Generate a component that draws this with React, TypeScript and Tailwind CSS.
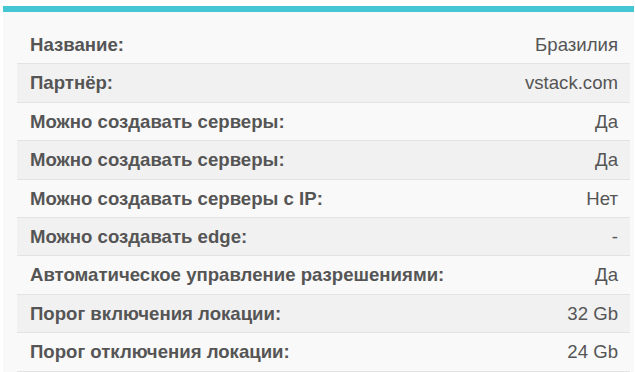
const rows: [string, string][] = [
  ['Название:', 'Бразилия'],
  ['Партнёр:', 'vstack.com'],
  ['Можно создавать серверы:', 'Да'],
  ['Можно создавать серверы:', 'Да'],
  ['Можно создавать серверы с IP:', 'Нет'],
  ['Можно создавать edge:', '-'],
  ['Автоматическое управление разрешениями:', 'Да'],
  ['Порог включения локации:', '32 Gb'],
  ['Порог отключения локации:', '24 Gb'],
];

export default function App() {
  return (
    <div className="w-[635px] h-[372px] overflow-hidden bg-white pt-[6px] pl-[3px] pr-[1px] font-['Liberation_Sans',Arial,sans-serif]">
      <div className="h-full bg-[#f9f9f9] border-t-[6px] border-[#45c6d3] pt-[13px] pl-[14px] pr-[4px]">
        <div className="flex flex-col text-[18.6px] leading-[21.4px] text-[#555]">
          {rows.map(([label, value], i) => (
            <div
              key={i}
              className={
                'flex items-center justify-between py-2 pl-[13px] pr-3 border-t ' +
                (i === 0 ? 'border-[#f9f9f9] ' : 'border-[#e3e3e3] ') +
                (i % 2 === 1 ? 'bg-[#f1f1f1]' : 'bg-[#f9f9f9]')
              }
            >
              <span className="font-bold">{label}</span>
              <span>{value}</span>
            </div>
          ))}
          <div className="border-t border-[#e3e3e3]" />
        </div>
      </div>
    </div>
  );
}
